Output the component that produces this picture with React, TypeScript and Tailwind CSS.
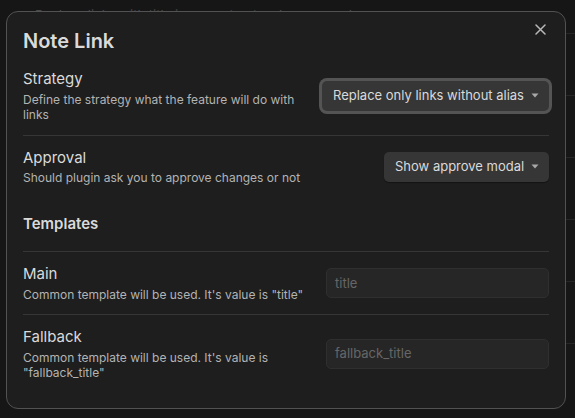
import type { ReactNode } from "react";

function Caret() {
  return (
    <svg width="8" height="5" viewBox="0 0 8 5" className="shrink-0">
      <path d="M0.5 0.5h7L4 4.5z" fill="#a8a8a8" />
    </svg>
  );
}

function Dropdown({ label, width, focused }: { label: string; width: string; focused?: boolean }) {
  return (
    <div
      className={[
        "flex h-[30px] shrink-0 items-center justify-between rounded-[5px] bg-[#363636] pl-[11px] pr-[10px] text-[13px] text-[#dadada]",
        width,
        focused ? "shadow-[0_0_0_3px_#545454]" : "shadow-[0_1px_1px_rgba(0,0,0,0.35)]",
      ].join(" ")}
    >
      <span className="whitespace-nowrap">{label}</span>
      <Caret />
    </div>
  );
}

function TextField({ placeholder }: { placeholder: string }) {
  return (
    <div className="flex h-[30px] w-[223px] shrink-0 items-center rounded-[5px] border border-[#2f2f2f] bg-[#262626] px-2 text-[13px] text-[#666666]">
      {placeholder}
    </div>
  );
}

function SettingRow({
  name,
  desc,
  control,
  first,
}: {
  name: string;
  desc: ReactNode;
  control: ReactNode;
  first?: boolean;
}) {
  return (
    <div className={["flex items-center py-3", first ? "" : "border-t border-[#363636]"].join(" ")}>
      <div className="mr-4 min-w-0 flex-1">
        <div className="text-[15px] leading-[1.3] text-[#dadada]">{name}</div>
        <div className="pt-[3px] text-[12px] leading-[1.3] text-[#b3b3b3]">{desc}</div>
      </div>
      {control}
    </div>
  );
}

export default function App() {
  return (
    <div className="relative h-[418px] overflow-hidden bg-[#161616] font-['Inter',sans-serif]">
      {/* settings page behind the modal */}
      <div className="pl-[35px] pt-[7px] text-[13px] leading-[1.3] text-[#4a4a4a]">
        Replace links with title in current note when opened
      </div>
      <div className="ml-[20px] mt-[9px]">
        {[0, 1, 2, 3, 4, 5].map((i) => (
          <div key={i} className="h-[62px] border-t border-[#272727]" />
        ))}
      </div>

      {/* modal */}
      <div className="absolute left-[6px] top-[11px] w-[560px] rounded-[12px] border border-[#525252] bg-[#1e1e1e] px-4 pb-[15px] pt-[18px] text-[#dadada]">
        <button className="absolute right-[19px] top-[12px] text-[#b8b8b8]" aria-label="Close">
          <svg width="11" height="11" viewBox="0 0 11 11">
            <path d="M1 1L10 10M10 1L1 10" stroke="currentColor" strokeWidth="1.5" strokeLinecap="round" />
          </svg>
        </button>

        <h2 className="mb-[5px] text-[20px] font-semibold leading-[1.1]">Note Link</h2>

        <SettingRow
          first
          name="Strategy"
          desc="Define the strategy what the feature will do with links"
          control={<Dropdown label="Replace only links without alias" width="w-[227px]" focused />}
        />
        <SettingRow
          name="Approval"
          desc="Should plugin ask you to approve changes or not"
          control={<Dropdown label="Show approve modal" width="w-[165px]" />}
        />

        <div className="border-t border-transparent pb-[18px] pt-[15px] text-[15px] font-semibold leading-[1.3]">
          Templates
        </div>

        <SettingRow
          name="Main"
          desc={`Common template will be used. It's value is "title"`}
          control={<TextField placeholder="title" />}
        />
        <SettingRow
          name="Fallback"
          desc={`Common template will be used. It's value is "fallback_title"`}
          control={<TextField placeholder="fallback_title" />}
        />
      </div>
    </div>
  );
}
